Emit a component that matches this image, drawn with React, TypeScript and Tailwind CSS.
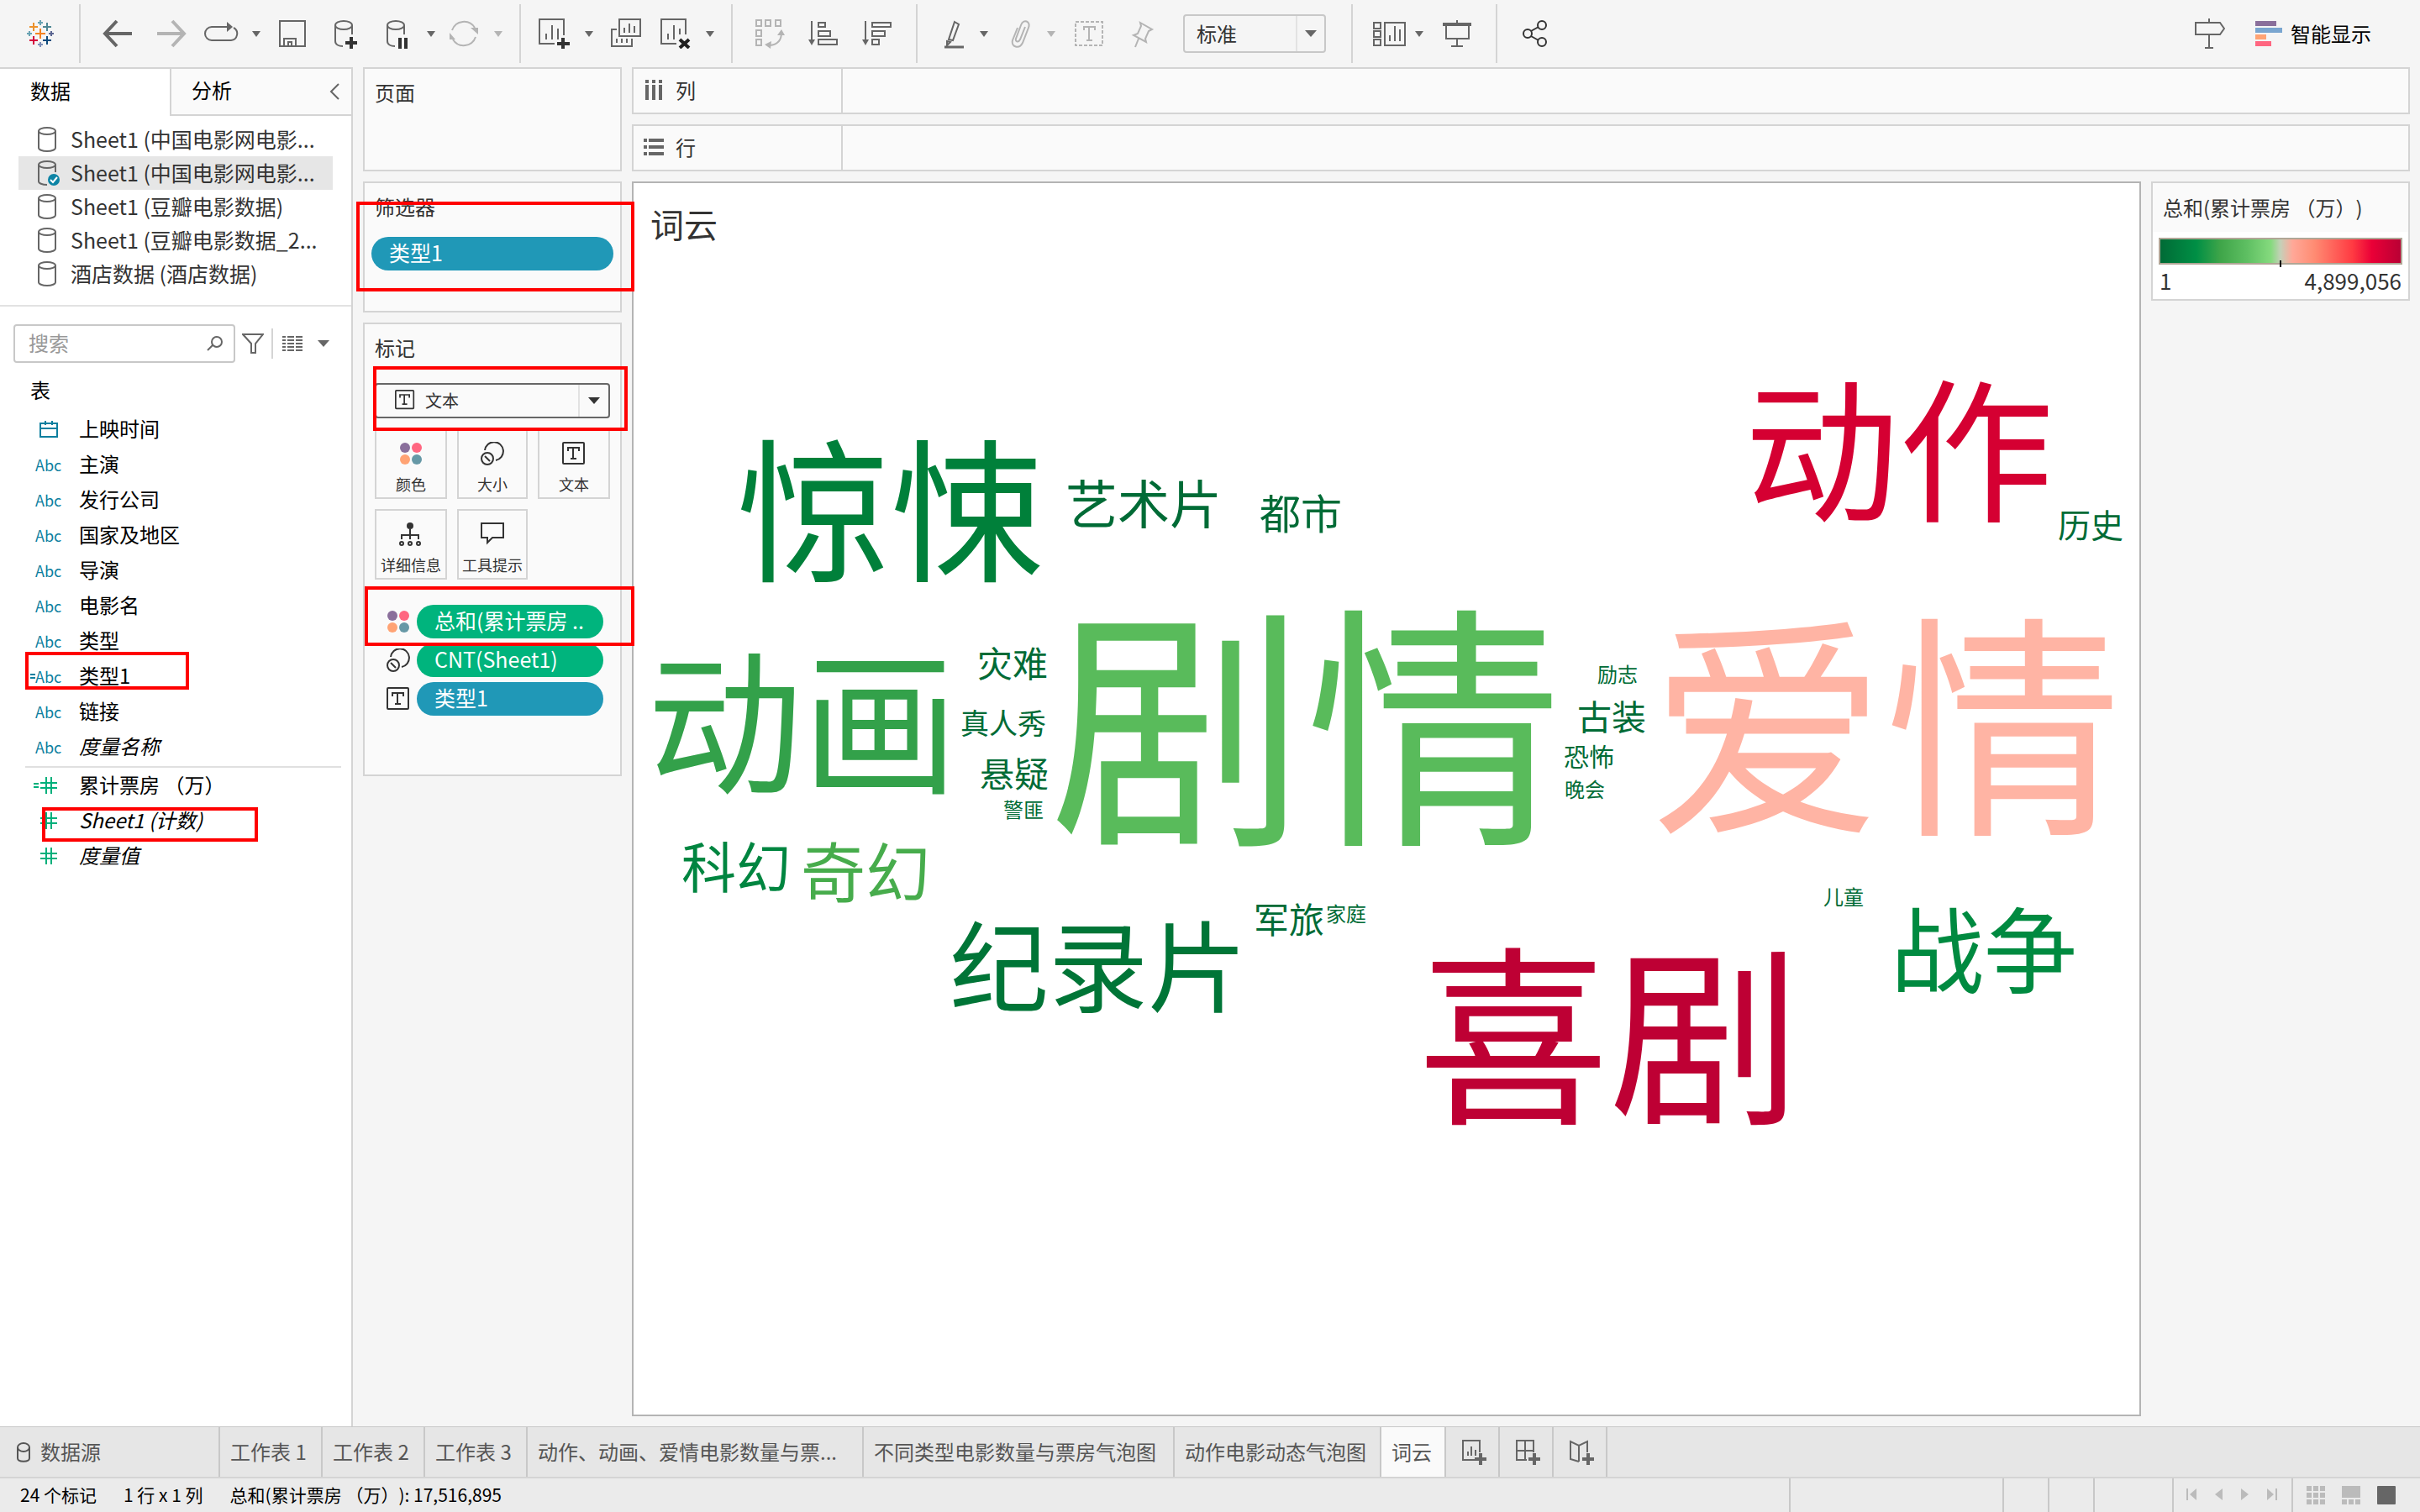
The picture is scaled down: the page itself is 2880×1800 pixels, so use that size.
import type { ReactNode } from "react";

type IconProps = { children: ReactNode; className?: string; w?: number };

// toolbar glyphs share a 36px high box
const Icon = ({ children, className = "", w = 36 }: IconProps) => (
  <svg
    width={w}
    height={36}
    viewBox={`0 0 ${w} 36`}
    fill="none"
    stroke="currentColor"
    strokeWidth={2}
    className={className}
  >
    {children}
  </svg>
);

type ToolProps = { label: string; className?: string; children: ReactNode };

const Tool = ({ label, className = "", children }: ToolProps) => (
  <button type="button" aria-label={label} className={`shrink-0 ${className}`}>
    {children}
  </button>
);

const Caret = ({ className = "" }: { className?: string }) => (
  <svg width="10" height="7" viewBox="0 0 10 7" fill="currentColor" className={className}>
    <path d="M0 0h10L5 7z" />
  </svg>
);

const BigCaret = ({ className = "" }: { className?: string }) => (
  <svg width="14" height="8" viewBox="0 0 14 8" fill="currentColor" className={className}>
    <path d="M0 0h14L7 8z" />
  </svg>
);

const Separator = ({ className = "" }: { className?: string }) => (
  <div className={`h-[70px] w-[2px] shrink-0 bg-[#d4d4d4] ${className}`} />
);

const logoMarks = [
  { x: 18, y: 18, r: 6, color: "#f5821f" },
  { x: 18, y: 5, r: 3, color: "#6aa3b3" },
  { x: 18, y: 31, r: 3, color: "#7d8fb8" },
  { x: 5, y: 18, r: 3, color: "#6aa3b3" },
  { x: 31, y: 18, r: 3, color: "#5b6591" },
  { x: 10, y: 10, r: 5, color: "#eb912c" },
  { x: 26, y: 10, r: 5, color: "#4e8794" },
  { x: 10, y: 26, r: 5, color: "#d4003b" },
  { x: 26, y: 26, r: 5, color: "#0f4b7d" },
];

const Toolbar = () => (
  <header className="flex h-20 items-center text-[#666]">
    <Tool label="Tableau" className="ml-[30px]">
      <Icon>
        {logoMarks.map((m) => (
          <path
            key={`${m.x}-${m.y}`}
            stroke={m.color}
            d={`M${m.x - m.r} ${m.y}h${m.r * 2}M${m.x} ${m.y - m.r}v${m.r * 2}`}
          />
        ))}
      </Icon>
    </Tool>
    <Separator className="ml-7" />
    <Tool label="撤消" className="ml-[26px]">
      <Icon>
        <path strokeWidth={4} d="M35 18H3M17 3L3 18l14 15" />
      </Icon>
    </Tool>
    <Tool label="重做" className="ml-7 text-[#b4b4b4]">
      <Icon>
        <path strokeWidth={4} d="M1 18h32M19 3l14 15-14 15" />
      </Icon>
    </Tool>
    <Tool label="重播" className="ml-5">
      <Icon w={42}>
        <path d="M30 10H10a8 8 0 000 16h23a8 8 0 003-15" />
        <path d="M28 4l7 6-7 6z" fill="currentColor" stroke="none" />
      </Icon>
    </Tool>
    <Tool label="重播选项" className="ml-4"><Caret /></Tool>
    <Tool label="保存" className="ml-5">
      <Icon>
        <path d="M3 3h30v30H3zM8 33V24h14v9M13 33v-5h4v5" />
      </Icon>
    </Tool>
    <Tool label="新建数据源" className="ml-[30px]">
      <Icon>
        <ellipse cx="13" cy="8" rx="10" ry="5" />
        <path d="M3 8v19c0 4 4 6 9 6M23 8v11" />
        <path stroke="#333" strokeWidth={4} d="M15 29h14M22 22v14" />
      </Icon>
    </Tool>
    <Tool label="暂停自动更新" className="ml-[26px]">
      <Icon>
        <ellipse cx="13" cy="8" rx="10" ry="5" />
        <path d="M3 8v19c0 4 4 6 9 6M23 8v11" />
        <path stroke="#333" strokeWidth={4} d="M18 23v13M25 23v13" />
      </Icon>
    </Tool>
    <Tool label="更新选项" className="ml-[14px]"><Caret /></Tool>
    <Tool label="运行更新" className="ml-4 text-[#b4b4b4]">
      <Icon>
        <path d="M4 14a15 15 0 0127-3M32 22a15 15 0 01-27 3" />
        <path d="M26 11h9v8zM1 25v-8l7 8z" fill="currentColor" stroke="none" />
      </Icon>
    </Tool>
    <Tool label="运行选项" className="ml-[18px] text-[#b4b4b4]"><Caret /></Tool>
    <Separator className="ml-5" />
    <Tool label="新建工作表" className="ml-5">
      <Icon w={40}>
        <path d="M20 30H2V1h29v19M10 25v-7M17 25V8M24 25V12" />
        <path stroke="#333" strokeWidth={4} d="M23 30h15M30 23v14" />
      </Icon>
    </Tool>
    <Tool label="工作表选项" className="ml-4"><Caret /></Tool>
    <Tool label="复制" className="ml-5">
      <Icon w={40}>
        <path d="M11 1h25v20H11zM8 13H2v20h24v-9M17 17v-6M23 17V6M29 17V9M8 29v-5M14 29v-5M20 29v-5" />
      </Icon>
    </Tool>
    <Tool label="清除工作表" className="ml-5">
      <Icon w={40}>
        <path d="M19 30H1V1h29v18M9 25v-7M16 25V8M23 19v-7" />
        <path stroke="#222" strokeWidth={4} d="M23 25l11 10M34 25L23 35" />
      </Icon>
    </Tool>
    <Tool label="清除选项" className="ml-[14px]"><Caret /></Tool>
    <Separator className="ml-5" />
    <Tool label="交换行和列" className="ml-[26px] text-[#b4b4b4]">
      <Icon>
        <path d="M2 2h6v7H2zM13 2h6v7h-6zM25 2h6v7h-6zM2 14h6v7H2zM2 25h6v7H2zM32 17c0 8-4 14-14 15" />
        <path d="M27 20l5-7 4 7zM20 27l-8 4 7 5z" fill="currentColor" stroke="none" />
      </Icon>
    </Tool>
    <Tool label="升序排序" className="ml-7">
      <Icon>
        <path d="M4 3v26M12 5h8v5h-8zM12 15h14v6H12zM12 25h22v6H12z" />
        <path d="M0 25h8l-4 7z" fill="currentColor" stroke="none" />
      </Icon>
    </Tool>
    <Tool label="降序排序" className="ml-7">
      <Icon>
        <path d="M4 3v26M12 5h22v5H12zM12 15h15v6H12zM12 25h8v6h-8z" />
        <path d="M0 25h8l-4 7z" fill="currentColor" stroke="none" />
      </Icon>
    </Tool>
    <Separator className="ml-7" />
    <Tool label="突出显示" className="ml-[26px]">
      <Icon>
        <path d="M18 4l5 3-7 19-5-1zM9 27l4 1-4 4z" />
        <path strokeWidth={3} d="M6 34h23" />
      </Icon>
    </Tool>
    <Tool label="突出显示选项" className="ml-3"><Caret /></Tool>
    <Tool label="组成员" className="ml-5 text-[#b4b4b4]">
      <Icon>
        <path d="M24 10l-6 15c-2 4-6 3-5-1l6-16c3-8 12-5 9 3l-7 18c-4 8-14 5-12-3l6-15" />
      </Icon>
    </Tool>
    <Tool label="组选项" className="ml-[14px] text-[#b4b4b4]"><Caret /></Tool>
    <Tool label="显示标记标签" className="ml-[22px] text-[#b4b4b4]">
      <Icon>
        <path strokeDasharray="4 2" d="M2 4h32v28H2z" />
        <path d="M12 14v-4h13v4M18 10v16M15 26h7" />
      </Icon>
    </Tool>
    <Tool label="固定" className="ml-7 text-[#b4b4b4]">
      <Icon>
        <path d="M15 5l14 8-4 2-4 9 1 4-15-8 5-2 4-9zM13 24L9 34" />
      </Icon>
    </Tool>
    <div className="relative ml-[30px] shrink-0">
      <select
        aria-label="适合"
        defaultValue="标准"
        className="h-[46px] w-[170px] appearance-none rounded-sm border-2 border-[#c8c8c8] bg-[#f5f5f5] pl-[14px] text-2xl leading-[30px] text-[#333]"
      >
        <option>标准</option>
      </select>
      <div className="pointer-events-none absolute inset-y-[2px] right-[2px] flex w-[34px] items-center justify-center border-l-2 border-[#e2e2e2]">
        <BigCaret />
      </div>
    </div>
    <Separator className="ml-[30px]" />
    <Tool label="显示/隐藏卡" className="ml-6">
      <Icon w={40}>
        <path d="M1 5h8v7H1zM1 15h8v7H1zM1 25h8v7H1zM14 5h24v27H14zM20 27v-7M26 27V9M32 27V13" />
      </Icon>
    </Tool>
    <Tool label="卡选项" className="ml-[10px]"><Caret /></Tool>
    <Tool label="演示模式" className="ml-[22px]">
      <Icon>
        <path d="M5 9v15h27V9M18 2v4M18 24v9M11 33h14" />
        <path strokeWidth={4} d="M1 7h34" />
      </Icon>
    </Tool>
    <Separator className="ml-7" />
    <Tool label="共享" className="ml-7 text-[#333]">
      <Icon>
        <circle cx="8" cy="18" r="5" />
        <circle cx="25" cy="8" r="5" />
        <circle cx="25" cy="28" r="5" />
        <path d="M12 15l9-5M12 21l9 5" />
      </Icon>
    </Tool>
    <Tool label="数据指南" className="ml-auto">
      <Icon>
        <path d="M1 5h29l5 7-5 7H1zM17 0v5M17 19v16M12 35h10" />
      </Icon>
    </Tool>
    <button type="button" className="mr-[58px] ml-9 flex shrink-0 items-center gap-2 text-2xl text-black">
      <svg width="34" height="30" viewBox="0 0 34 30">
        <path fill="#8a6f9b" d="M0 0h25v6H0z" />
        <path fill="#7aa6d0" d="M0 8h32v6H0z" />
        <path fill="#ffa374" d="M0 16h13v6H0z" />
        <path fill="#ff6680" d="M0 24h19v6H0z" />
      </svg>
      智能显示
    </button>
  </header>
);

const sources = [
  { name: "Sheet1 (中国电影网电影...", active: false },
  { name: "Sheet1 (中国电影网电影...", active: true },
  { name: "Sheet1 (豆瓣电影数据)", active: false },
  { name: "Sheet1 (豆瓣电影数据_2...", active: false },
  { name: "酒店数据 (酒店数据)", active: false },
];

const Cylinder = ({ checked }: { checked: boolean }) => (
  <svg width="28" height="32" viewBox="0 0 28 32" fill="none" stroke="#666" strokeWidth="2">
    <ellipse cx="12" cy="6" rx="10" ry="4" />
    {checked ? (
      <>
        <path d="M2 6v20c0 2 4 4 10 4M22 6v9" />
        <circle cx="20" cy="24" r="7" fill="#0d84a5" stroke="none" />
        <path stroke="#fff" d="M16 24l3 3 5-6" />
      </>
    ) : (
      <path d="M2 6v20c0 2 4 4 10 4s10-2 10-4V6" />
    )}
  </svg>
);

const dimensions = [
  { name: "上映时间", kind: "date" },
  { name: "主演", kind: "abc" },
  { name: "发行公司", kind: "abc" },
  { name: "国家及地区", kind: "abc" },
  { name: "导演", kind: "abc" },
  { name: "电影名", kind: "abc" },
  { name: "类型", kind: "abc" },
  { name: "类型1", kind: "abc", calc: true, boxed: true },
  { name: "链接", kind: "abc" },
  { name: "度量名称", kind: "abc", italic: true },
];

const measures = [
  { name: "累计票房 （万）", kind: "num", calc: true },
  { name: "Sheet1 (计数)", kind: "num", italic: true, boxed: true },
  { name: "度量值", kind: "num", italic: true },
];

type FieldData = {
  name: string;
  kind: string;
  calc?: boolean;
  italic?: boolean;
  boxed?: boolean;
};

const Equals = () => (
  <svg width="6" height="6" viewBox="0 0 6 6" stroke="currentColor" strokeWidth="2">
    <path d="M0 1h6M0 5h6" />
  </svg>
);

const Field = ({ name, kind, calc, italic, boxed }: FieldData) => (
  <li className="relative flex h-[42px] items-center">
    <span
      className={`flex w-[94px] shrink-0 items-center ${
        kind === "num" ? "pl-10 text-[#00b07b]" : "pl-9 text-[#0d7f9f]"
      }`}
    >
      <span className="w-[6px]">{calc && <Equals />}</span>
      {kind === "abc" && <span className="text-lg leading-6">Abc</span>}
      {kind === "date" && (
        <svg width="28" height="22" viewBox="0 0 28 22" fill="none" stroke="currentColor" strokeWidth="2" className="ml-1">
          <path d="M2 4h20v16H2zM2 10h20M8 1v5M16 1v5" />
        </svg>
      )}
      {kind === "num" && (
        <svg width="20" height="20" viewBox="0 0 20 20" stroke="currentColor" strokeWidth="2" className="ml-[2px]">
          <path d="M0 7h20M0 13h20M7 0v20M13 0v20" />
        </svg>
      )}
    </span>
    <span className={`pb-[2px] text-2xl leading-8 text-black ${italic ? "italic" : ""}`}>{name}</span>
    {boxed && kind === "abc" && (
      <div className="absolute top-[-8px] left-[30px] h-[45px] w-[195px] border-4 border-[#f00]" />
    )}
    {boxed && kind === "num" && (
      <div className="absolute top-[5px] left-[50px] h-[41px] w-[257px] border-4 border-[#f00]" />
    )}
  </li>
);

const DataPane = () => (
  <aside className="flex w-[420px] shrink-0 flex-col border-t-2 border-r-2 border-[#d4d4d4] bg-white text-[#333]">
    <div className="flex h-14 text-2xl leading-[52px] text-black">
      <button type="button" className="w-[202px] pb-1 pl-9 text-left">数据</button>
      <div className="flex flex-1 items-center justify-between border-b-2 border-l-2 border-[#d4d4d4] bg-[#fafafa] pr-[14px] pl-6">
        <button type="button" className="pb-1">分析</button>
        <button type="button" aria-label="折叠" className="text-[#666]">
          <svg width="12" height="20" viewBox="0 0 12 20" fill="none" stroke="currentColor" strokeWidth="2">
            <path d="M11 1L2 10l9 9" />
          </svg>
        </button>
      </div>
    </div>
    <ul className="mt-2 border-b-2 border-[#e2e2e2] pr-[22px] pb-[17px] pl-[22px]">
      {sources.map((s, i) => (
        <li
          key={i}
          className={`flex h-10 items-center gap-3 pl-[22px] text-[25px] leading-8 whitespace-nowrap ${
            s.active ? "bg-[#e6e6e6]" : ""
          }`}
        >
          <Cylinder checked={s.active} />
          <span className="pb-[3px]">{s.name}</span>
        </li>
      ))}
    </ul>
    <div className="mt-[21px] flex h-[46px] items-center pl-4 text-[#666]">
      <label className="flex h-full w-[264px] items-center rounded-sm border-2 border-[#c8c8c8] pr-3 pl-4">
        <input
          type="text"
          aria-label="搜索"
          placeholder="搜索"
          className="w-full min-w-0 pb-[2px] text-2xl leading-8 outline-none placeholder:text-[#999]"
        />
        <svg width="20" height="20" viewBox="0 0 20 20" fill="none" stroke="currentColor" strokeWidth="2" className="shrink-0">
          <circle cx="12" cy="8" r="6" />
          <path d="M7 12l-6 6" />
        </svg>
      </label>
      <button type="button" aria-label="筛选" className="ml-2">
        <svg width="26" height="26" viewBox="0 0 26 26" fill="none" stroke="currentColor" strokeWidth="2">
          <path d="M1 2h24l-9 11v11h-5V13z" />
        </svg>
      </button>
      <div className="ml-[9px] h-9 w-[2px] bg-[#d4d4d4]" />
      <button type="button" aria-label="视图" className="ml-[11px]">
        <svg width="24" height="20" viewBox="0 0 24 20" stroke="currentColor" strokeWidth="2" fill="none">
          <path d="M0 2h4M0 6h4M0 10h4M0 14h4M0 18h4M6 2h8M6 6h8M6 10h8M6 14h8M6 18h8M16 2h8M16 6h8M16 10h8M16 14h8M16 18h8" />
        </svg>
      </button>
      <button type="button" aria-label="视图选项" className="ml-[18px]"><BigCaret /></button>
    </div>
    <h2 className="mt-4 pl-9 text-2xl leading-8 text-black">表</h2>
    <ul className="mt-[10px]">
      {dimensions.map((d) => (
        <Field key={d.name} {...d} />
      ))}
    </ul>
    <hr className="mt-[2px] mr-3 ml-[30px] border-t-2 border-[#e0e0e0]" />
    <ul>
      {measures.map((m) => (
        <Field key={m.name} {...m} />
      ))}
    </ul>
  </aside>
);

const ColorDots = () => (
  <svg width="28" height="28" viewBox="0 0 28 28">
    <circle cx="7" cy="7" r="6" fill="#8a6f9b" />
    <circle cx="21" cy="7" r="6" fill="#ff6680" />
    <circle cx="7" cy="21" r="6" fill="#ffa374" />
    <circle cx="21" cy="21" r="6" fill="#6698a6" />
  </svg>
);

const SizeIcon = () => (
  <svg width="28" height="28" viewBox="0 0 28 28" fill="none" stroke="#333" strokeWidth="2">
    <circle cx="8" cy="20" r="7" />
    <path d="M5 17l6 6M5 10a11 11 0 1113 12" />
  </svg>
);

const TextIcon = ({ size = 28 }: { size?: number }) => (
  <svg width={size} height={size} viewBox="0 0 28 28" fill="none" stroke="#333" strokeWidth="2">
    <rect x="1" y="1" width="25" height="25" rx="1" />
    <path d="M7 11V7h13v4M13 7v14M10 20h7" />
  </svg>
);

const DetailIcon = () => (
  <svg width="28" height="28" viewBox="0 0 28 28" fill="none" stroke="#333" strokeWidth="2">
    <circle cx="13" cy="4" r="4" fill="#333" stroke="none" />
    <path d="M13 8v12M3 20v-5h20v5" />
    <circle cx="3" cy="25" r="2" />
    <circle cx="13" cy="25" r="2" />
    <circle cx="23" cy="25" r="2" />
  </svg>
);

const TooltipIcon = () => (
  <svg width="28" height="28" viewBox="0 0 28 28" fill="none" stroke="#333" strokeWidth="2">
    <path d="M1 1h26v17H14l-6 6v-6H1z" />
  </svg>
);

const markButtons = [
  { label: "颜色", icon: <ColorDots /> },
  { label: "大小", icon: <SizeIcon /> },
  { label: "文本", icon: <TextIcon /> },
  { label: "详细信息", icon: <DetailIcon /> },
  { label: "工具提示", icon: <TooltipIcon /> },
];

const markPills = [
  { label: "总和(累计票房 ..", icon: <ColorDots />, color: "bg-[#00b47d]" },
  { label: "CNT(Sheet1)", icon: <SizeIcon />, color: "bg-[#00b47d]" },
  { label: "类型1", icon: <TextIcon />, color: "bg-[#2098b7]" },
];

const Cards = () => (
  <div className="flex w-[308px] shrink-0 flex-col gap-3 text-[#333]">
    <section className="h-[124px] border-2 border-[#d4d4d4] bg-[#fafafa] px-3 pt-3">
      <h2 className="text-2xl leading-8">页面</h2>
    </section>
    <section className="relative h-[156px] border-2 border-[#d4d4d4] bg-[#fafafa] px-2 pt-3">
      <h2 className="pl-1 text-2xl leading-8">筛选器</h2>
      <button type="button" className="mt-5 h-10 w-full rounded-full bg-[#2098b7] pb-1 pl-[21px] text-left text-[25px] text-white">
        类型1
      </button>
      <div className="absolute top-[22px] left-[-10px] h-[107px] w-[331px] border-4 border-[#f00]" />
    </section>
    <section className="relative h-[540px] border-2 border-[#d4d4d4] bg-[#fafafa] px-3 pt-3">
      <h2 className="text-2xl leading-8">标记</h2>
      <div className="relative mt-[26px] w-[280px]">
        <select
          aria-label="标记类型"
          defaultValue="文本"
          className="h-[42px] w-full appearance-none rounded-sm border-2 border-[#666] bg-[#fafafa] pl-[58px] text-xl leading-7"
        >
          <option>文本</option>
        </select>
        <div className="pointer-events-none absolute top-2 left-6">
          <TextIcon size={24} />
        </div>
        <div className="pointer-events-none absolute inset-y-[2px] right-[2px] flex w-9 items-center justify-center border-l-2 border-[#e2e2e2]">
          <BigCaret />
        </div>
      </div>
      <div className="mt-3 grid w-[280px] grid-cols-[86px_84px_86px] gap-3">
        {markButtons.map((b) => (
          <button
            key={b.label}
            type="button"
            className="flex h-[84px] flex-col items-center border-2 border-[#d4d4d4] pt-[14px] text-lg leading-6 whitespace-nowrap"
          >
            {b.icon}
            <span className="mt-[10px]">{b.label}</span>
          </button>
        ))}
      </div>
      <ul className="mt-[30px] flex flex-col gap-[6px]">
        {markPills.map((p) => (
          <li key={p.label} className="flex items-center gap-2 pl-[14px]">
            {p.icon}
            <button
              type="button"
              className={`h-10 w-[222px] rounded-full pb-1 pl-[21px] text-left text-[25px] whitespace-nowrap text-white ${p.color}`}
            >
              {p.label}
            </button>
          </li>
        ))}
      </ul>
      <div className="absolute top-[50px] left-[10px] h-[77px] w-[303px] border-4 border-[#f00]" />
      <div className="absolute top-[312px] left-0 h-[71px] w-[321px] border-4 border-[#f00]" />
    </section>
  </div>
);

const Shelf = ({ label, children }: { label: string; children: ReactNode }) => (
  <div className="flex h-14 border-2 border-[#d4d4d4] bg-[#fafafa]">
    <div className="flex w-[249px] items-center gap-4 border-r-2 border-[#d4d4d4] pb-[2px] pl-3 text-2xl text-[#333]">
      <svg width="24" height="24" viewBox="0 0 24 24" stroke="#666" strokeWidth="4">
        {children}
      </svg>
      <span className="-ml-[2px] leading-8">{label}</span>
    </div>
  </div>
);

// centre x, centre y and font size in view units
const words = [
  { text: "惊悚", x: 306, y: 290, size: 183, color: "#00803a" },
  { text: "艺术片", x: 607, y: 282, size: 62, color: "#006b36" },
  { text: "都市", x: 794, y: 293, size: 49, color: "#006b36" },
  { text: "动作", x: 1506, y: 219, size: 184, color: "#d50032" },
  { text: "历史", x: 1734, y: 307, size: 39, color: "#006b36" },
  { text: "动画", x: 201, y: 543, size: 185, color: "#33a14a" },
  { text: "灾难", x: 451, y: 472, size: 42, color: "#006b36" },
  { text: "真人秀", x: 440, y: 543, size: 34, color: "#006b36" },
  { text: "悬疑", x: 453, y: 603, size: 41, color: "#006b36" },
  { text: "警匪", x: 464, y: 646, size: 24, color: "#006b36" },
  { text: "剧情", x: 800, y: 549, size: 305, color: "#59bb5b" },
  { text: "励志", x: 1171, y: 485, size: 24, color: "#006b36" },
  { text: "古装", x: 1164, y: 535, size: 41, color: "#006b36" },
  { text: "恐怖", x: 1137, y: 583, size: 30, color: "#006b36" },
  { text: "晚会", x: 1132, y: 622, size: 24, color: "#006b36" },
  { text: "爱情", x: 1490, y: 548, size: 281, color: "#ffb4a4" },
  { text: "科幻", x: 122, y: 714, size: 65, color: "#008540" },
  { text: "奇幻", x: 276, y: 721, size: 77, color: "#47ac4c" },
  { text: "纪录片", x: 553, y: 833, size: 118, color: "#007537" },
  { text: "军旅", x: 780, y: 777, size: 42, color: "#006b36" },
  { text: "家庭", x: 848, y: 770, size: 24, color: "#006b36" },
  { text: "儿童", x: 1440, y: 750, size: 24, color: "#006b36" },
  { text: "喜剧", x: 1161, y: 916, size: 228, color: "#be0034" },
  { text: "战争", x: 1607, y: 814, size: 111, color: "#008a40" },
];

const Sheet = () => (
  <section className="flex flex-1 flex-col border-2 border-[#b4b4b4] bg-white">
    <h1 className="pt-[18px] pl-5 text-[40px] leading-[60px] text-[#333]">词云</h1>
    <svg viewBox="0 0 1792 1366" className="mt-[22px] w-full" textAnchor="middle">
      {words.map((w) => (
        <text key={w.text} x={w.x} y={w.y + w.size * 0.38} fontSize={w.size} fill={w.color}>
          {w.text}
        </text>
      ))}
    </svg>
  </section>
);

const Legend = () => (
  <section className="w-[308px] shrink-0 self-start border-2 border-[#d4d4d4] bg-white text-[#333]">
    <h2 className="h-[58px] bg-[#fafafa] pl-3 text-2xl leading-[58px] whitespace-nowrap">总和(累计票房 （万）)</h2>
    <div className="relative mx-[7px] mt-[7px] h-8 border-2 border-[#b0a696] bg-[linear-gradient(90deg,#006b36_0%,#008f45_15%,#3fa549_25%,#5ebf62_36%,#85da7e_46%,#c5d0b8_50%,#ffa898_55%,#ff8c73_64%,#ff3a42_80%,#ea0037_88%,#b90034_100%)]">
      <div className="absolute -bottom-[5px] left-[142px] h-2 w-[2px] bg-black" />
    </div>
    <div className="flex justify-between px-2 pt-[3px] pb-[6px] text-[26px] leading-8">
      <span>1</span>
      <span>4,899,056</span>
    </div>
  </section>
);

const tabs = [
  { name: "工作表 1", width: "w-[122px]" },
  { name: "工作表 2", width: "w-[122px]" },
  { name: "工作表 3", width: "w-[122px]" },
  { name: "动作、动画、爱情电影数量与票...", width: "w-[400px]" },
  { name: "不同类型电影数量与票房气泡图", width: "w-[370px]" },
  { name: "动作电影动态气泡图", width: "w-[246px]" },
];

const newTabs = [
  { name: "新建工作表", path: "M16 25H2V2h20v14M8 20v-5M12 20V9M17 20v-7" },
  { name: "新建仪表板", path: "M14 25H2V2h20v14M12 2v23M2 14h20" },
  { name: "新建故事", path: "M12 27L2 24V3l10 5 10-5v13M12 8v19" },
];

const SheetTabs = () => (
  <nav className="flex h-[62px] border-t border-b-2 border-t-[#c8c8c8] border-b-[#d4d4d4] bg-[#e6e6e6] text-2xl leading-[54px] whitespace-nowrap text-[#555]">
    <button type="button" className="flex w-[262px] items-center gap-3 border-r-2 border-[#c8c8c8] pl-5">
      <svg width="16" height="24" viewBox="0 0 16 24" fill="none" stroke="currentColor" strokeWidth="2">
        <ellipse cx="8" cy="6" rx="7" ry="5" />
        <path d="M1 6v13c0 5 14 5 14 0V6" />
      </svg>
      <span className="pb-[2px]">数据源</span>
    </button>
    {tabs.map((t) => (
      <button
        key={t.name}
        type="button"
        className={`border-r-2 border-[#c8c8c8] pb-[2px] pl-3 text-left ${t.width}`}
      >
        {t.name}
      </button>
    ))}
    <button type="button" className="w-[77px] border-r-2 border-[#c8c8c8] bg-[#fafafa] pb-[2px] pl-3 text-left">
      词云
    </button>
    {newTabs.map((t) => (
      <button
        key={t.name}
        type="button"
        aria-label={t.name}
        className="flex w-16 items-center border-r-2 border-[#c8c8c8] pl-[18px]"
      >
        <svg width="32" height="32" viewBox="0 0 32 32" fill="none" stroke="#666" strokeWidth="2">
          <path d={t.path} />
          <path strokeWidth="4" d="M16 24h14M23 17v14" />
        </svg>
      </button>
    ))}
  </nav>
);

const StatusBar = () => (
  <footer className="flex h-10 items-center bg-[#ebebeb] pl-6 text-[21px] leading-7 text-black">
    <div className="flex flex-1 gap-8 pb-[2px] whitespace-pre">
      <span>24 个标记</span>
      <span>1 行 x 1 列</span>
      <span>总和(累计票房 （万）): 17,516,895</span>
    </div>
    <div className="h-full w-[254px] border-l-2 border-[#c8c8c8]" />
    <div className="h-full w-[54px] border-l-2 border-[#c8c8c8]" />
    <div className="h-full w-[54px] border-l-2 border-[#c8c8c8]" />
    <div className="h-full w-[94px] border-l-2 border-[#c8c8c8]" />
    <div className="flex h-full w-[142px] items-center gap-[22px] border-l-2 border-[#c8c8c8] pb-[2px] pl-[15px] text-[#bbb]">
      <button type="button" aria-label="第一个">
        <svg width="12" height="14" viewBox="0 0 12 14" fill="currentColor"><path d="M0 0h2v14H0zM12 0v14L4 7z" /></svg>
      </button>
      <button type="button" aria-label="上一个">
        <svg width="9" height="14" viewBox="0 0 9 14" fill="currentColor"><path d="M9 0v14L0 7z" /></svg>
      </button>
      <button type="button" aria-label="下一个">
        <svg width="9" height="14" viewBox="0 0 9 14" fill="currentColor"><path d="M0 0v14l9-7z" /></svg>
      </button>
      <button type="button" aria-label="最后一个">
        <svg width="12" height="14" viewBox="0 0 12 14" fill="currentColor"><path d="M10 0h2v14h-2zM0 0v14l8-7z" /></svg>
      </button>
    </div>
    <div className="flex h-full w-[153px] items-center gap-5 border-l-2 border-[#c8c8c8] pl-4 text-[#bbb]">
      <button type="button" aria-label="工作表排序程序">
        <svg width="22" height="22" viewBox="0 0 22 22" fill="currentColor">
          <path d="M0 0h6v6H0zM8 0h6v6H8zM16 0h6v6h-6zM0 8h6v6H0zM8 8h6v6H8zM16 8h6v6h-6zM0 16h6v6H0zM8 16h6v6H8zM16 16h6v6h-6z" />
        </svg>
      </button>
      <button type="button" aria-label="幻灯片">
        <svg width="22" height="22" viewBox="0 0 22 22" fill="currentColor">
          <path d="M0 0h22v14H0zM0 16h6v6H0zM8 16h6v6H8zM16 16h6v6h-6z" />
        </svg>
      </button>
      <button type="button" aria-label="标签" className="text-[#666]">
        <svg width="22" height="22" viewBox="0 0 22 22" fill="currentColor"><rect width="22" height="22" rx="1" /></svg>
      </button>
    </div>
  </footer>
);

const App = () => {
  return (
    <div className="flex min-h-screen flex-col bg-[#f5f5f5] font-['Noto_Sans_CJK_SC',sans-serif] [text-spacing-trim:space-all]">
      <Toolbar />
      <main className="flex flex-1 gap-3 pr-3">
        <DataPane />
        <Cards />
        <div className="flex min-w-0 flex-1 flex-col gap-3 pb-3">
          <Shelf label="列">
            <path d="M4 0v4M12 0v4M20 0v4M4 6v18M12 6v18M20 6v18" />
          </Shelf>
          <Shelf label="行">
            <path d="M0 4h4M0 12h4M0 20h4M6 4h18M6 12h18M6 20h18" />
          </Shelf>
          <div className="flex flex-1 gap-3">
            <Sheet />
            <Legend />
          </div>
        </div>
      </main>
      <SheetTabs />
      <StatusBar />
    </div>
  );
};

export default App;
